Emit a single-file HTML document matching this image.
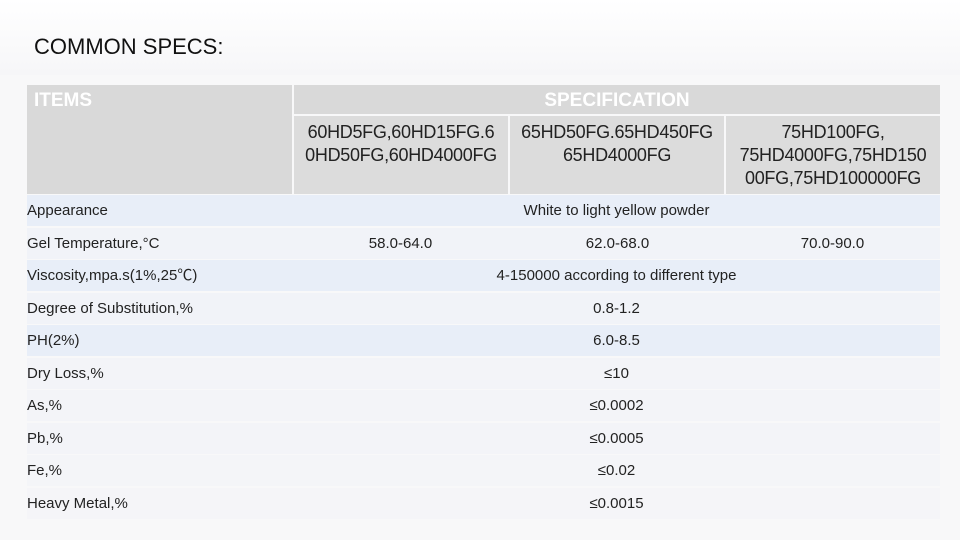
<!DOCTYPE html><html><head><meta charset="utf-8"><style>
body{margin:0;width:960px;height:540px;overflow:hidden;background:#f8f8f9;font-family:"Liberation Sans","Noto Sans CJK SC",sans-serif;position:relative}
.a{position:absolute;box-sizing:border-box}
.h{background:#d9d9d9;color:#fff;font-weight:bold;font-size:19px}
.s{background:#dcdcdc;color:#222;font-size:18px;text-align:center;line-height:23px;padding-top:5px;letter-spacing:-0.3px}
.r{position:absolute;left:27px;width:913px;height:31px;font-size:15px;color:#222;line-height:31px}
.r .l{position:absolute;left:0}
.r .c{position:absolute;left:266px;width:647px;text-align:center}
</style></head><body>
<div class="a" style="left:0;top:0;width:960px;height:75px;background:linear-gradient(#fff,#f6f6f8)"></div>
<div class="a" style="left:34px;top:34px;font-size:22px;color:#111">COMMON SPECS:</div>
<div class="a h" style="left:27px;top:85px;width:265px;height:109px;padding:5px 7px">ITEMS</div>
<div class="a h" style="left:294px;top:85px;width:646px;height:29px;text-align:center;padding-top:5px">SPECIFICATION</div>
<div class="a s" style="left:294px;top:116px;width:214px;height:78px">60HD5FG,60HD15FG.6<br>0HD50FG,60HD4000FG</div>
<div class="a s" style="left:510px;top:116px;width:214px;height:78px">65HD50FG.65HD450FG<br>65HD4000FG</div>
<div class="a s" style="left:726px;top:116px;width:214px;height:78px">75HD100FG,<br>75HD4000FG,75HD150<br>00FG,75HD100000FG</div>
<div class="r" style="top:195px;background:#e8eef8"><span class="l">Appearance</span><span class="c">White to light yellow powder</span></div>
<div class="r" style="top:228px;background:#f1f3f8"><span class="l">Gel Temperature,°C</span><span class="c" style="width:215px">58.0-64.0</span><span class="c" style="left:483px;width:215px">62.0-68.0</span><span class="c" style="left:698px;width:215px">70.0-90.0</span></div>
<div class="r" style="top:260px;background:#e8eef8"><span class="l">Viscosity,mpa.s(1%,25℃)</span><span class="c">4-150000 according to different type</span></div>
<div class="r" style="top:293px;background:#f1f3f8"><span class="l">Degree of Substitution,%</span><span class="c">0.8-1.2</span></div>
<div class="r" style="top:325px;background:#e8eef8"><span class="l">PH(2%)</span><span class="c">6.0-8.5</span></div>
<div class="r" style="top:358px;background:#f3f4f8"><span class="l">Dry Loss,%</span><span class="c">≤10</span></div>
<div class="r" style="top:390px;background:#f3f4f8"><span class="l">As,%</span><span class="c">≤0.0002</span></div>
<div class="r" style="top:423px;background:#f3f4f8"><span class="l">Pb,%</span><span class="c">≤0.0005</span></div>
<div class="r" style="top:455px;background:#f4f5f8"><span class="l">Fe,%</span><span class="c">≤0.02</span></div>
<div class="r" style="top:488px;background:#f5f5f8"><span class="l">Heavy Metal,%</span><span class="c">≤0.0015</span></div>
</body></html>
